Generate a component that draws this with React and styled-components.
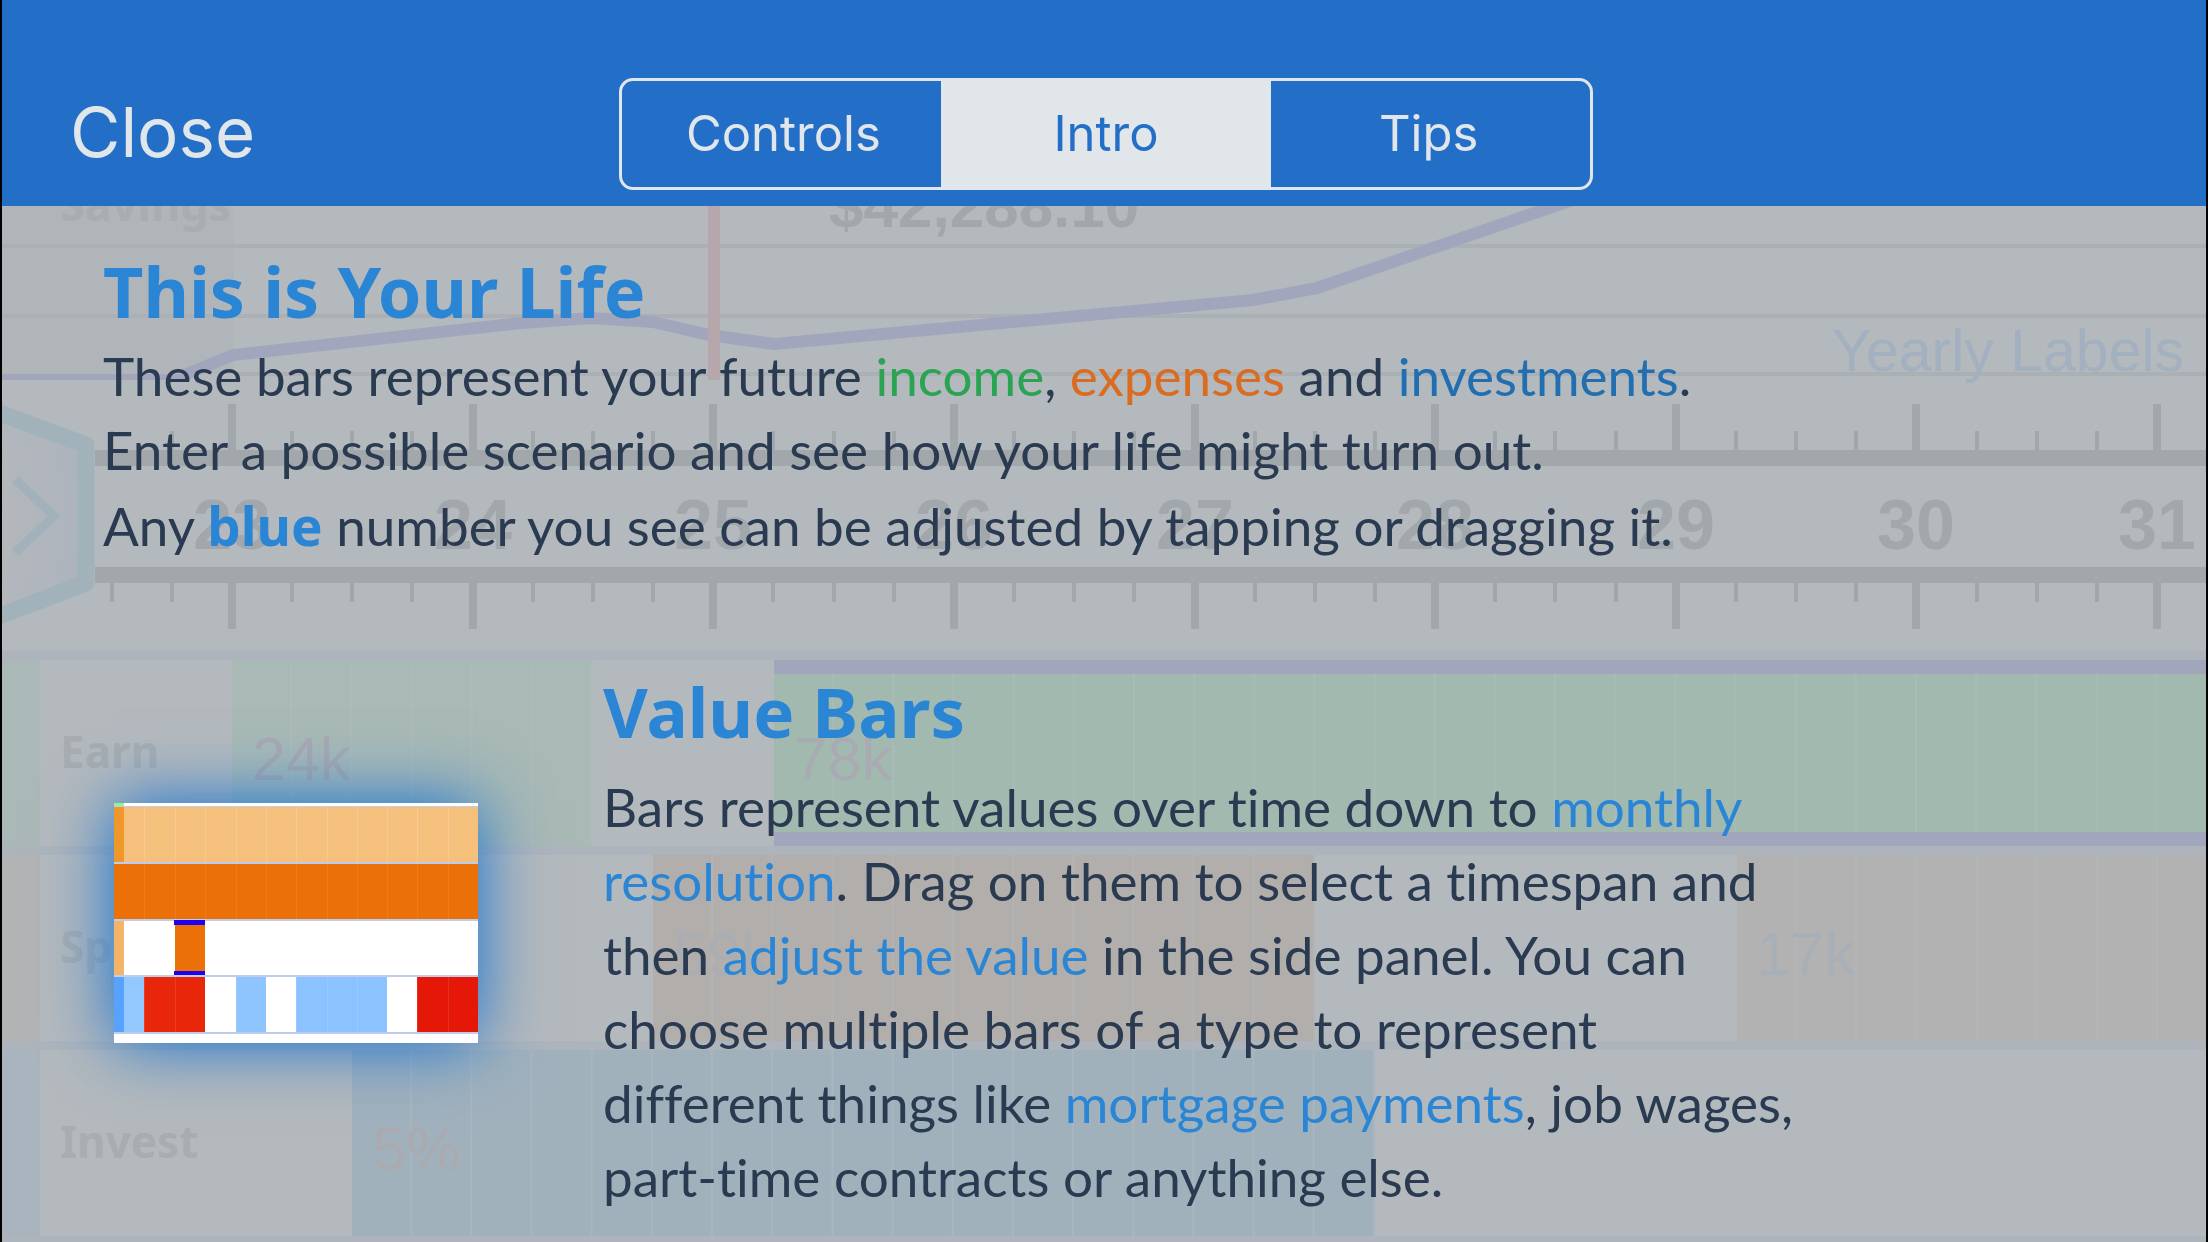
import React, { useState } from "react";
import styled, { createGlobalStyle } from "styled-components";

const ui = `Inter, "Liberation Sans", sans-serif`;
const copy = `Lato, "Noto Sans", sans-serif`;
const display = `"Noto Sans", "Open Sans", sans-serif`;
const numeric = `"Liberation Sans", Arial, sans-serif`;

const color = {
  header: "#236fc8",
  light: "#e1e6ea",
  surface: "#b4b9bd",
  ink: "#293a51",
  link: "#2a86d5",
  income: "#2aa452",
  expenses: "#d96c20",
  investments: "#216eb0",
  faint: "#a8adb0",
  ruler: "#a2a7ab",
  rule: "#adb4bb",
  select: "#a2a6bd",
};

const GlobalStyle = createGlobalStyle`
  *, *::before, *::after { box-sizing: border-box; }
  body { margin: 0; background: #000; }
  h1, h2, p, figure { margin: 0; }
`;

const Page = styled.div`
  display: grid;
  grid-template-rows: auto 1fr;
  height: 100vh;
  overflow: hidden;
  border: solid #000;
  border-width: 0 2px;
  background: ${color.surface};
  color: ${color.ink};
  font-family: ${copy};
  font-variant-ligatures: none;
`;

const Header = styled.header`
  display: grid;
  grid-template-columns: 1fr minmax(0, 974px) 1fr;
  align-items: center;
  padding: 78px 64px 16px 68px;
  background: ${color.header};
`;

const CloseButton = styled.button`
  justify-self: start;
  border: 0;
  padding: 0 0 4px;
  background: none;
  color: ${color.light};
  font: 400 69px/80px ${ui};
  cursor: pointer;
`;

const Segments = styled.nav`
  display: flex;
  height: 112px;
  overflow: hidden;
  border: 3px solid ${color.light};
  border-radius: 14px;
`;

const Segment = styled.button`
  flex: 1;
  border: 0;
  padding: 0;
  background: ${(p) => (p.$active ? color.light : "transparent")};
  box-shadow: ${(p) => (p.$active ? `0 0 0 4px ${color.light}` : "none")};
  color: ${(p) => (p.$active ? color.header : color.light)};
  font: 400 49px/60px ${ui};
  cursor: pointer;
`;

const Stage = styled.main`
  position: relative;
  overflow: hidden;
`;

const Backdrop = styled.div`
  position: absolute;
  inset: 0;
  display: flex;
  flex-direction: column;
`;

const Drawing = styled.svg`
  display: block;
  flex: none;
  width: 100%;
  height: ${(p) => p.$height}px;
`;

const Row = styled.div`
  display: flex;
  flex: none;
  height: 195px;
  border-top: 9px solid ${color.rule};
`;

const Edge = styled.div`
  flex: 0 0 38px;
  background: ${(p) => p.$fill};
`;

const RowName = styled.div`
  flex: 0 0 192px;
  padding: 61px 0 0 20px;
  color: ${color.faint};
  font: 700 44px/60px ${display};
`;

const Span = styled.div`
  flex: ${(p) => p.$quarters} 1 0;
  min-width: 0;
  padding-top: ${(p) => (p.$selected ? 50 : 64)}px;
  text-indent: 20px;
  border: solid ${color.select};
  border-width: ${(p) => (p.$selected ? "14px 0" : "0")};
  background-color: ${(p) => p.$fill || "transparent"};
  background-image: ${(p) =>
    p.$fill ? "linear-gradient(90deg, transparent calc(100% - 2px), rgba(180, 188, 194, 0.4) 0)" : "none"};
  background-size: calc(100% / ${(p) => p.$quarters}) 100%;
  color: ${(p) => p.$ink};
  font: 400 61px/70px ${numeric};
`;

const Article = styled.article`
  position: relative;
  padding: 45px 100px 0 101px;
`;

const Title = styled.h1`
  color: ${color.link};
  font: 700 70px/80px ${display};
`;

const Subtitle = styled.h2`
  color: ${color.link};
  font: 700 69px/80px ${display};
`;

const Text = styled.p`
  margin-top: ${(p) => p.$gap}px;
  font: 400 53px/74px ${copy};
  font-variant-ligatures: none;
  white-space: nowrap;
`;

const Tint = styled.span`
  color: ${(p) => color[p.$tone]};
`;

const Strong = styled.strong`
  color: ${color.link};
  font: 700 53px/77px ${display};
`;

const Feature = styled.section`
  display: flex;
  align-items: flex-start;
  gap: 125px;
  margin-top: 107px;
  padding-left: 11px;
`;

const Thumbnail = styled.figure`
  flex: none;
  width: 364px;
  height: 240px;
  margin-top: 132px;
  box-shadow: 0 0 64px rgb(16, 112, 210);
`;

const tabs = ["Controls", "Intro", "Tips"];

const rows = [
  {
    name: "Earn",
    edge: "#aab8b7",
    spans: [
      { quarters: 6, fill: "#a9b9b5", label: "24k", ink: "#a9a9b1" },
      { quarters: 3 },
      { quarters: 23.8, fill: "#a2b9b0", label: "78k", ink: "#a9abb3", selected: true },
    ],
  },
  {
    name: "Spend",
    edge: "#b2b4b4",
    spans: [
      { quarters: 7 },
      { quarters: 11, fill: "#b2aeab", label: "59k", ink: "#aaaeb2" },
      { quarters: 7 },
      { quarters: 7.8, fill: "#b2b2b2", label: "17k", ink: "#a9afb7" },
    ],
  },
  {
    name: "Invest",
    edge: "#aab4be",
    spans: [
      { quarters: 2 },
      { quarters: 17, fill: "#a1b1bc", label: "5%", ink: "#aaabb1" },
      { quarters: 13.8 },
    ],
  },
];

const years = [23, 24, 25, 26, 27, 28, 29, 30, 31];
const quarterX = (n) => Math.round(230 + (n * 1925) / 32);
const ticks = Array.from({ length: 35 }, (_, i) => i - 2);

function Chart() {
  return (
    <Drawing $height={198} aria-hidden="true">
      <rect width="232" height="168" fill="#b0b5b9" />
      <g fill="#abb0b4">
        <rect y="38" width="100%" height="4" />
        <rect y="108" width="100%" height="4" />
        <rect x="232" y="166" width="100%" height="4" />
      </g>
      <rect y="168" width="184" height="6" fill={color.select} />
      <polyline
        points="180,170 231,149 519,117 590,112 651,116 707,129 772,138 1251,94 1315,82 1550,1 1640,-30"
        fill="none"
        stroke={color.select}
        strokeWidth="12"
        strokeLinejoin="round"
      />
      <rect x="706" width="12" height="174" fill="#b6a7ac" />
      <text x="58" y="15" fontFamily={display} fontWeight="700" fontSize="45" fill={color.faint}>
        Savings
      </text>
      <text x="827" y="21" fontFamily={numeric} fontWeight="700" fontSize="62" fill={color.ruler}>
        $42,288.10
      </text>
      <text x="1830" y="165" fontFamily={numeric} fontSize="59" fill="#a3b0c0">
        Yearly Labels
      </text>
    </Drawing>
  );
}

function Ruler() {
  return (
    <Drawing $height={247} aria-hidden="true">
      <defs>
        <radialGradient id="knob" cx="0" cy="0.5" r="1">
          <stop offset="0.4" stopColor="#b4b8bc" />
          <stop offset="1" stopColor="#adb3be" />
        </radialGradient>
      </defs>
      <g fill={color.ruler}>
        <rect x="93" y="46" width="100%" height="16" />
        <rect x="93" y="163" width="100%" height="16" />
        {ticks.map((n) =>
          n % 4 === 0 ? (
            <g key={n}>
              <rect x={quarterX(n) - 4} width="8" height="46" />
              <rect x={quarterX(n) - 4} y="179" width="8" height="46" />
            </g>
          ) : (
            <g key={n}>
              <rect x={quarterX(n) - 2} y="27" width="4" height="19" />
              <rect x={quarterX(n) - 2} y="179" width="4" height="19" />
            </g>
          )
        )}
        {years.map((year, i) => (
          <text
            key={year}
            x={quarterX(i * 4)}
            y="145"
            textAnchor="middle"
            fontFamily={numeric}
            fontWeight="700"
            fontSize="70"
          >
            {year}
          </text>
        ))}
      </g>
      <path
        d="M-60 -10 L0 10 L84 41 V179 L0 211 L-60 231 Z"
        fill="url(#knob)"
        stroke="#a2b2ba"
        strokeWidth="17"
        strokeLinejoin="round"
      />
      <path d="M13 75 L52 112 L13 149" fill="none" stroke="#a2b2ba" strokeWidth="9" />
    </Drawing>
  );
}

function Timeline() {
  return (
    <Backdrop aria-hidden="true">
      <Chart />
      <Ruler />
      {rows.map((row) => (
        <Row key={row.name}>
          <Edge $fill={row.edge} />
          <RowName>{row.name}</RowName>
          {row.spans.map((s, i) => (
            <Span key={i} $quarters={s.quarters} $fill={s.fill} $ink={s.ink} $selected={s.selected}>
              {s.label}
            </Span>
          ))}
        </Row>
      ))}
      <Row />
    </Backdrop>
  );
}

const monthEdges = [30, 61, 91, 122, 152, 182, 213, 243, 273, 303, 334];

function BarsPreview() {
  return (
    <svg width="364" height="240" role="img" aria-label="Value bars">
      <rect width="364" height="240" fill="#fff" />
      <rect width="10" height="3" fill="#8cf59a" />
      <g fill="#c0cdea">
        <rect y="3" width="364" height="2" />
        <rect y="59" width="364" height="2" />
        <rect y="116" width="364" height="2" />
        <rect y="172" width="364" height="2" />
        <rect y="229" width="364" height="2" />
      </g>
      <rect y="4" width="364" height="55" fill="#f5c07c" />
      <rect y="4" width="10" height="55" fill="#f09729" />
      <rect y="61" width="364" height="55" fill="#eb7008" />
      <rect y="118" width="10" height="54" fill="#f4b467" />
      <rect x="61" y="117" width="30" height="55" fill="#eb7008" />
      <rect x="60" y="117" width="31" height="5" fill="#2000f0" />
      <rect x="60" y="168" width="31" height="4" fill="#2000f0" />
      <g transform="translate(0 174)">
        <rect width="10" height="55" fill="#57a2ff" />
        <rect x="10" width="20" height="55" fill="#93c8ff" />
        <rect x="30" width="61" height="55" fill="#e8270a" />
        <rect x="122" width="30" height="55" fill="#8ec5ff" />
        <rect x="182" width="91" height="55" fill="#8ac3ff" />
        <rect x="303" width="61" height="55" fill="#e51808" />
      </g>
      {monthEdges.map((x) => (
        <g key={x} fill="#fff">
          <rect x={x} y="4" width="1" height="55" opacity="0.18" />
          <rect x={x} y="61" width="1" height="55" opacity="0.08" />
          <rect x={x} y="174" width="1" height="55" opacity="0.1" />
        </g>
      ))}
    </svg>
  );
}

export default function App() {
  const [active, setActive] = useState("Intro");
  return (
    <Page>
      <GlobalStyle />
      <Header>
        <CloseButton type="button">Close</CloseButton>
        <Segments aria-label="Help sections">
          {tabs.map((tab) => (
            <Segment
              key={tab}
              type="button"
              $active={tab === active}
              aria-pressed={tab === active}
              onClick={() => setActive(tab)}
            >
              {tab}
            </Segment>
          ))}
        </Segments>
      </Header>
      <Stage>
        <Timeline />
        <Article>
          <Title>This is Your Life</Title>
          <Text $gap={8}>
            These bars represent your future <Tint $tone="income">income</Tint>,{" "}
            <Tint $tone="expenses">expenses</Tint> and <Tint $tone="investments">investments</Tint>.
            <br />
            Enter a possible scenario and see how your life might turn out.
            <br />
            Any <Strong>blue</Strong> number you see can be adjusted by tapping or dragging it.
          </Text>
          <Feature>
            <Thumbnail>
              <BarsPreview />
            </Thumbnail>
            <div>
              <Subtitle>Value Bars</Subtitle>
              <Text $gap={19}>
                Bars represent values over time down to <Tint $tone="link">monthly</Tint>
                <br />
                <Tint $tone="link">resolution</Tint>. Drag on them to select a timespan and
                <br />
                then <Tint $tone="link">adjust the value</Tint> in the side panel. You can
                <br />
                choose multiple bars of a type to represent
                <br />
                different things like <Tint $tone="link">mortgage payments</Tint>, job wages,
                <br />
                part-time contracts or anything else.
              </Text>
            </div>
          </Feature>
        </Article>
      </Stage>
    </Page>
  );
}
